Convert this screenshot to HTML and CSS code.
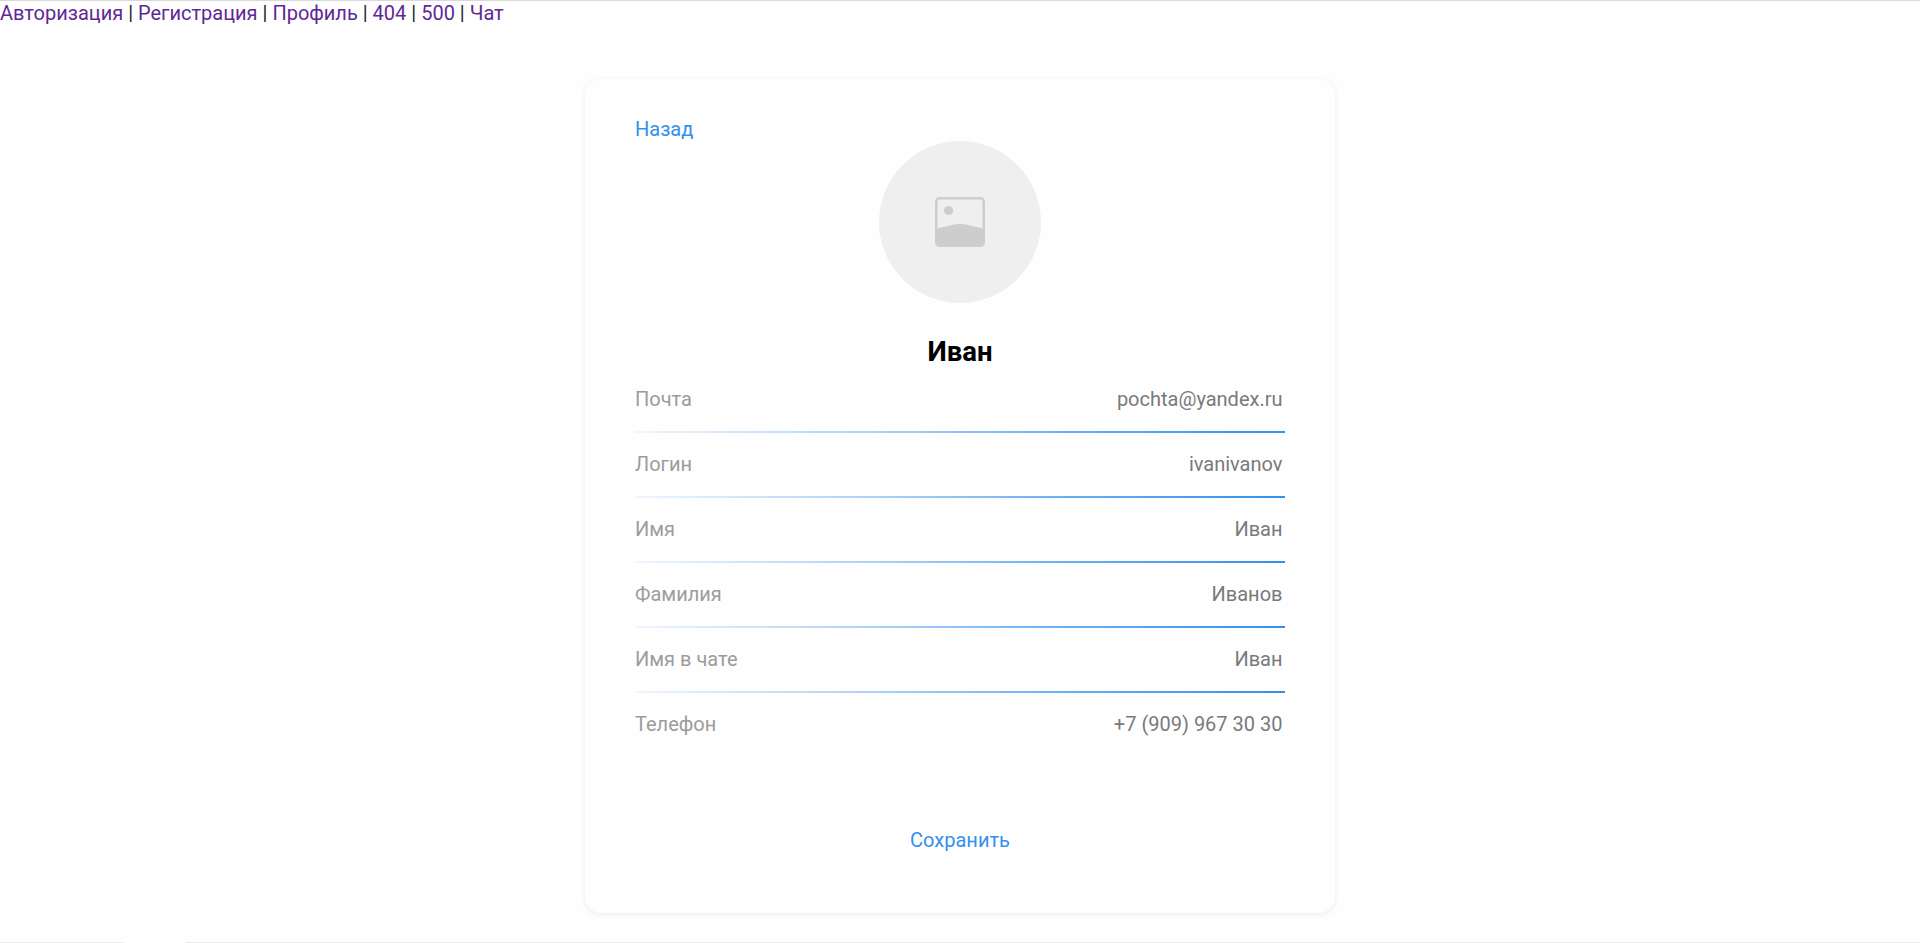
FILE: index.html
```html
<!DOCTYPE html>
<html lang="ru">
<head>
<meta charset="utf-8">
<title>Профиль</title>
<link rel="stylesheet" href="styles.css">
</head>
<body>
<nav class="nav"><a href="#">Авторизация</a> | <a href="#">Регистрация</a> | <a href="#">Профиль</a> | <a href="#">404</a> | <a href="#">500</a> | <a href="#">Чат</a></nav>
<main class="card">
  <a class="back" href="#">Назад</a>
  <div class="avatar">
    <svg width="50" height="50" viewBox="0 0 50 50">
      <path fill="#cdcdcd" fill-rule="evenodd" d="M5 0H45Q50 0 50 5V45Q50 50 45 50H5Q0 50 0 45V5Q0 0 5 0ZM5 2.5Q2.5 2.5 2.5 5V31.5L17 28Q25 26 33 28L47.500 31.500V5Q47.500 2.500 45 2.500Z"/>
      <circle cx="13.500" cy="13.500" r="4.600" fill="#cdcdcd"/>
    </svg>
  </div>
  <h1 class="name">Иван</h1>
  <div class="fields">
    <div class="row"><span class="label">Почта</span><span class="value">pochta@yandex.ru</span></div>
    <div class="row"><span class="label">Логин</span><span class="value">ivanivanov</span></div>
    <div class="row"><span class="label">Имя</span><span class="value">Иван</span></div>
    <div class="row"><span class="label">Фамилия</span><span class="value">Иванов</span></div>
    <div class="row"><span class="label">Имя в чате</span><span class="value">Иван</span></div>
    <div class="row"><span class="label">Телефон</span><span class="value">+7 (909) 967 30 30</span></div>
  </div>
  <button class="save" type="button">Сохранить</button>
</main>
<footer class="edge"><span class="edge-start"></span><span class="edge-end"></span></footer>
</body>
</html>
```

FILE: styles.css
```css
* {
  box-sizing: border-box;
}

body {
  display: flex;
  flex-direction: column;
  align-items: center;
  height: 943px;
  margin: 0;
  overflow: hidden;
  border-top: 1px solid #d9d9d9;
  background: #fefefe;
  color: #222;
  font: 20px/23px Roboto, sans-serif;
}

.nav {
  width: 100%;
  height: 24px;
  padding-top: 1px;
}

.nav a {
  color: #5f2896;
  text-decoration: none;
}

.card {
  display: flex;
  flex-direction: column;
  align-items: center;
  width: 750px;
  height: 834px;
  margin-top: 54px;
  padding: 39px 50px 0;
  border-radius: 16px;
  background: #fefefe;
  box-shadow: 0 1px 6px rgba(0, 0, 0, 0.08);
}

.back {
  align-self: flex-start;
  height: 23px;
  color: #3390ec;
  text-decoration: none;
}

.avatar {
  display: flex;
  align-items: center;
  justify-content: center;
  width: 162px;
  height: 162px;
  flex: none;
  border-radius: 50%;
  background: #efefef;
}

.name {
  margin: 32px 0 0;
  color: #000;
  font-size: 27.5px;
  font-weight: 700;
  line-height: 33px;
}

.fields {
  width: 100%;
}

.row {
  display: flex;
  align-items: center;
  justify-content: space-between;
  height: 65px;
  padding: 0 2.5px 2px 0;
  background: linear-gradient(90deg, #eff6fe 0%, #a9d0f7 38%, #6aaff5 66%, #3390ec 100%) bottom / 100% 2px no-repeat;
}

.row:last-child {
  background: none;
}

.label {
  color: #9c9c9c;
}

.value {
  color: #7a7a7a;
}

.save {
  margin-top: 71px;
  padding: 0;
  border: 0;
  background: none;
  color: #3390ec;
  font: inherit;
}

.edge {
  display: flex;
  justify-content: space-between;
  width: 100%;
  height: 1px;
  margin-top: auto;
}

.edge-start {
  width: 124px;
  background: #ebebeb;
}

.edge-end {
  width: 1735px;
  background: #ebebeb;
}
```
